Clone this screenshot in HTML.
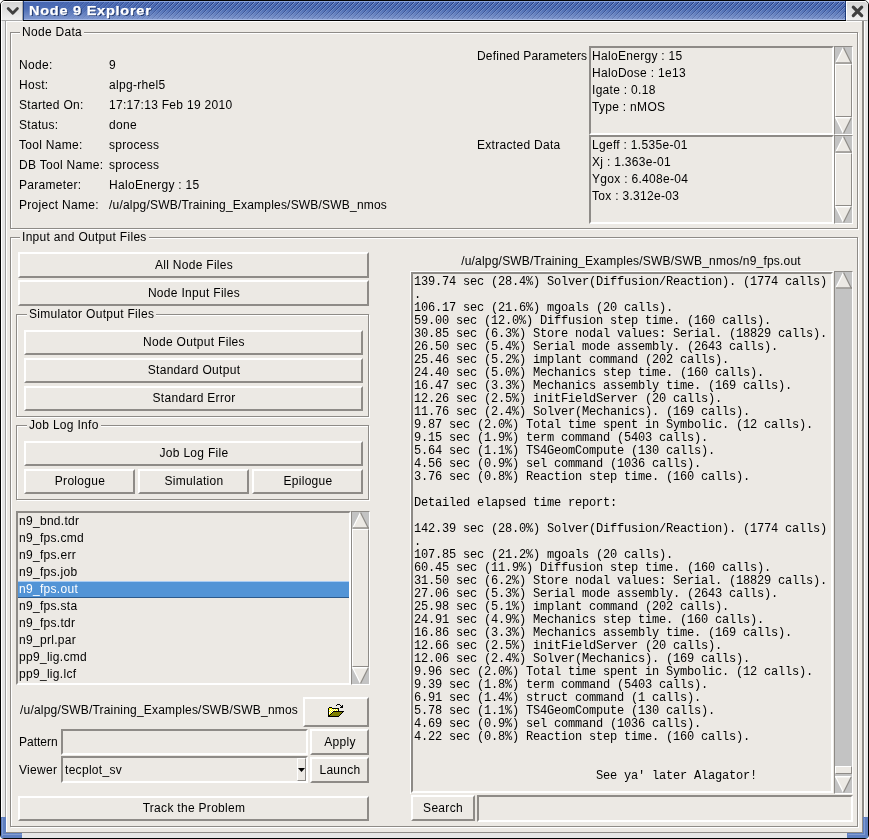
<!DOCTYPE html>
<html><head><meta charset="utf-8"><style>
html,body{margin:0;padding:0;background:#fff;}
body{width:869px;height:839px;position:relative;overflow:hidden;}
.t,.mono{will-change:transform;}
body>div, body>pre{position:absolute;box-sizing:content-box;}
.t{white-space:pre;font-family:"Liberation Sans",sans-serif;font-size:12px;color:#000;line-height:normal;letter-spacing:0.3px;}
.mono{margin:0;font-family:"Liberation Mono",monospace;line-height:13px;color:#000;white-space:pre;}
</style></head><body>
<div style="left:0;top:0;width:867px;height:837px;border:1px solid #000;border-radius:5px 5px 4px 4px;background:#ECE9E4"></div>
<div style="left:1px;top:21px;width:1px;height:817px;background:#FFFFFF;"></div>
<div style="left:2px;top:21px;width:3px;height:817px;background:#E6E6E6;"></div>
<div style="left:5px;top:21px;width:1px;height:812px;background:#A0A0A0;"></div>
<div style="left:6px;top:21px;width:1px;height:811px;background:#FFFFFF;"></div>
<div style="left:862px;top:21px;width:2px;height:812px;background:#8E8B87;"></div>
<div style="left:864px;top:21px;width:1px;height:817px;background:#FFFFFF;"></div>
<div style="left:865px;top:21px;width:3px;height:817px;background:#E6E6E6;"></div>
<div style="left:6px;top:832px;width:858px;height:1px;background:#8E8B87;"></div>
<div style="left:1px;top:833px;width:864px;height:5px;background:#E6E6E6;"></div>
<div style="left:7px;top:21px;width:855px;height:1px;background:#FFFFFF;"></div>
<div style="left:1px;top:817px;width:5px;height:21px;background:#5F7FC0;"></div>
<div style="left:1px;top:833px;width:21px;height:5px;background:#5F7FC0;"></div>
<div style="left:2px;top:818px;width:1px;height:18px;background:#7F9AD0;"></div>
<div style="left:3px;top:834px;width:19px;height:1px;background:#7F9AD0;"></div>
<div style="left:863px;top:817px;width:5px;height:21px;background:#5F7FC0;"></div>
<div style="left:847px;top:833px;width:21px;height:5px;background:#5F7FC0;"></div>
<div style="left:864px;top:818px;width:1px;height:17px;background:#7F9AD0;"></div>
<div style="left:848px;top:834px;width:16px;height:1px;background:#7F9AD0;"></div>
<div style="left:23px;top:1px;width:823px;height:19px;background:linear-gradient(#8CA6DE 0,#8CA6DE 1px,#4666B1 1px,#4E6EB5 8px,#7F97CE 18px,#A2B6E4 18px);border-left:1px solid #1C3A78;border-right:1px solid #1C3A78;box-sizing:border-box"></div>
<svg style="position:absolute;left:24px;top:2px" width="821" height="17" shape-rendering="crispEdges"><defs><pattern id="st" width="5" height="5" patternUnits="userSpaceOnUse"><rect x="4" y="0" width="1" height="1" fill="#18296A" fill-opacity="0.75"/><rect x="3" y="1" width="1" height="1" fill="#18296A" fill-opacity="0.75"/><rect x="2" y="2" width="1" height="1" fill="#18296A" fill-opacity="0.75"/><rect x="1" y="3" width="1" height="1" fill="#18296A" fill-opacity="0.75"/><rect x="0" y="4" width="1" height="1" fill="#18296A" fill-opacity="0.75"/><rect x="0" y="0" width="1" height="1" fill="#FFFFFF" fill-opacity="0.3"/><rect x="4" y="1" width="1" height="1" fill="#FFFFFF" fill-opacity="0.3"/><rect x="3" y="2" width="1" height="1" fill="#FFFFFF" fill-opacity="0.3"/><rect x="2" y="3" width="1" height="1" fill="#FFFFFF" fill-opacity="0.3"/><rect x="1" y="4" width="1" height="1" fill="#FFFFFF" fill-opacity="0.3"/></pattern><linearGradient id="fd" x1="0" y1="0" x2="0" y2="1"><stop offset="0" stop-color="#fff" stop-opacity="1"/><stop offset="1" stop-color="#fff" stop-opacity="0.2"/></linearGradient><mask id="mk"><rect width="821" height="17" fill="url(#fd)"/></mask><linearGradient id="fh" gradientUnits="userSpaceOnUse" x1="20" y1="0" x2="150" y2="0"><stop offset="0" stop-color="#fff" stop-opacity="0"/><stop offset="1" stop-color="#fff" stop-opacity="1"/></linearGradient><mask id="mh"><rect width="821" height="17" fill="url(#fh)"/></mask></defs><g mask="url(#mh)"><rect width="821" height="17" fill="url(#st)" mask="url(#mk)"/></g></svg>
<div style="left:23px;top:20px;width:823px;height:1px;background:#000;"></div>
<div style="left:1px;top:1px;width:22px;height:20px;border-top:1px solid #fff;border-left:1px solid #fff;border-right:1px solid #A8A8A8;border-bottom:1px solid #A8A8A8;box-sizing:border-box;background:linear-gradient(#D4D4D4,#F0F0F0);border-top-left-radius:4px"></div>
<svg style="position:absolute;left:0;top:0" width="24" height="21"><polyline points="8.2,8.5 12.8,13.2 17.4,8.5" fill="none" stroke="#404040" stroke-width="2.8" stroke-linecap="round" stroke-linejoin="round"/></svg>
<div style="left:846px;top:1px;width:22px;height:20px;border-top:1px solid #fff;border-left:1px solid #fff;border-right:1px solid #E0E0E0;border-bottom:1px solid #A8A8A8;box-sizing:border-box;background:linear-gradient(#D4D4D4,#F0F0F0);border-top-right-radius:4px"></div>
<svg style="position:absolute;left:846px;top:0" width="22" height="21"><path d="M7.3,7.2 L15.7,15.6 M15.7,7.2 L7.3,15.6" fill="none" stroke="#404040" stroke-width="3.2" stroke-linecap="round"/></svg>
<div class="t" style="left:29px;top:3px;font-weight:bold;font-size:13px;letter-spacing:0.65px;color:#fff;text-shadow:1px 1px 0 #1E3468;transform:scaleX(1.12);transform-origin:0 0;-webkit-text-stroke:0.25px #fff">Node 9 Explorer</div>
<div style="left:11px;top:33px;width:846px;height:195px;border:1px solid #FFFFFF;"></div>
<div style="left:10px;top:32px;width:846px;height:195px;border:1px solid #8E8B87;"></div>
<div class="t" style="left:20px;top:25px;padding:0 2px;background:#ECE9E4;font-size:12px;">Node Data</div>
<div class="t" style="left:19px;top:58px;font-family:'Liberation Sans',sans-serif;font-size:12px;line-height:normal;color:#000;">Node:</div>
<div class="t" style="left:109px;top:58px;font-family:'Liberation Sans',sans-serif;font-size:12px;line-height:normal;color:#000;">9</div>
<div class="t" style="left:19px;top:78px;font-family:'Liberation Sans',sans-serif;font-size:12px;line-height:normal;color:#000;">Host:</div>
<div class="t" style="left:109px;top:78px;font-family:'Liberation Sans',sans-serif;font-size:12px;line-height:normal;color:#000;">alpg-rhel5</div>
<div class="t" style="left:19px;top:98px;font-family:'Liberation Sans',sans-serif;font-size:12px;line-height:normal;color:#000;">Started On:</div>
<div class="t" style="left:109px;top:98px;font-family:'Liberation Sans',sans-serif;font-size:12px;line-height:normal;color:#000;">17:17:13 Feb 19 2010</div>
<div class="t" style="left:19px;top:118px;font-family:'Liberation Sans',sans-serif;font-size:12px;line-height:normal;color:#000;">Status:</div>
<div class="t" style="left:109px;top:118px;font-family:'Liberation Sans',sans-serif;font-size:12px;line-height:normal;color:#000;">done</div>
<div class="t" style="left:19px;top:138px;font-family:'Liberation Sans',sans-serif;font-size:12px;line-height:normal;color:#000;">Tool Name:</div>
<div class="t" style="left:109px;top:138px;font-family:'Liberation Sans',sans-serif;font-size:12px;line-height:normal;color:#000;">sprocess</div>
<div class="t" style="left:19px;top:158px;font-family:'Liberation Sans',sans-serif;font-size:12px;line-height:normal;color:#000;">DB Tool Name:</div>
<div class="t" style="left:109px;top:158px;font-family:'Liberation Sans',sans-serif;font-size:12px;line-height:normal;color:#000;">sprocess</div>
<div class="t" style="left:19px;top:178px;font-family:'Liberation Sans',sans-serif;font-size:12px;line-height:normal;color:#000;">Parameter:</div>
<div class="t" style="left:109px;top:178px;font-family:'Liberation Sans',sans-serif;font-size:12px;line-height:normal;color:#000;">HaloEnergy : 15</div>
<div class="t" style="left:19px;top:198px;font-family:'Liberation Sans',sans-serif;font-size:12px;line-height:normal;color:#000;">Project Name:</div>
<div class="t" style="left:109px;top:198px;font-family:'Liberation Sans',sans-serif;font-size:12px;line-height:normal;color:#000;letter-spacing:0.2px">/u/alpg/SWB/Training_Examples/SWB/SWB_nmos</div>
<div class="t" style="left:477px;top:49px;font-family:'Liberation Sans',sans-serif;font-size:12px;line-height:normal;color:#000;letter-spacing:0.2px">Defined Parameters</div>
<div class="t" style="left:477px;top:138px;font-family:'Liberation Sans',sans-serif;font-size:12px;line-height:normal;color:#000;">Extracted Data</div>
<div style="left:589px;top:46px;width:241px;height:85px;border:2px solid;border-color:#8E8B87 #FFFFFF #FFFFFF #8E8B87;background:#ECE9E4;"></div>
<div class="t" style="left:592px;top:49px;font-family:'Liberation Sans',sans-serif;font-size:12px;line-height:normal;color:#000;">HaloEnergy : 15</div>
<div class="t" style="left:592px;top:66px;font-family:'Liberation Sans',sans-serif;font-size:12px;line-height:normal;color:#000;">HaloDose : 1e13</div>
<div class="t" style="left:592px;top:83px;font-family:'Liberation Sans',sans-serif;font-size:12px;line-height:normal;color:#000;">Igate : 0.18</div>
<div class="t" style="left:592px;top:100px;font-family:'Liberation Sans',sans-serif;font-size:12px;line-height:normal;color:#000;">Type : nMOS</div>
<div style="left:834px;top:46px;width:17px;height:87px;border:1px solid;border-color:#8E8B87 #FFFFFF #FFFFFF #8E8B87;background:#ECE9E4;"></div>
<svg style="position:absolute;left:835px;top:47px" width="17" height="17" viewBox="0 0 17 17">
<rect x="0" y="0" width="17" height="17" fill="#C3C3C3"/>
<polygon points="8.5,0.5 16.5,16.5 0.5,16.5" fill="#ECE9E4"/>
<line x1="8.5" y1="0.5" x2="0.5" y2="16.5" stroke="#FFFFFF" stroke-width="1.2"/>
<line x1="8.5" y1="0.5" x2="16.5" y2="16.5" stroke="#8E8B87" stroke-width="1.2"/>
<line x1="0.5" y1="16" x2="17" y2="16" stroke="#8E8B87" stroke-width="1.4"/>
</svg>
<svg style="position:absolute;left:835px;top:117px" width="17" height="17" viewBox="0 0 17 17">
<rect x="0" y="0" width="17" height="17" fill="#C3C3C3"/>
<polygon points="0.5,0.5 16.5,0.5 8.5,16.5" fill="#ECE9E4"/>
<line x1="0" y1="0.7" x2="17" y2="0.7" stroke="#FFFFFF" stroke-width="1.4"/>
<line x1="0.5" y1="0.5" x2="8.5" y2="16.5" stroke="#FFFFFF" stroke-width="1.2"/>
<line x1="16.5" y1="0.5" x2="8.5" y2="16.5" stroke="#8E8B87" stroke-width="1.2"/>
</svg>
<div style="left:835px;top:64px;width:15px;height:51px;border:1px solid;border-color:#FFFFFF #8E8B87 #8E8B87 #FFFFFF;background:#ECE9E4;"></div>
<div style="left:589px;top:135px;width:241px;height:85px;border:2px solid;border-color:#8E8B87 #FFFFFF #FFFFFF #8E8B87;background:#ECE9E4;"></div>
<div class="t" style="left:592px;top:138px;font-family:'Liberation Sans',sans-serif;font-size:12px;line-height:normal;color:#000;">Lgeff : 1.535e-01</div>
<div class="t" style="left:592px;top:155px;font-family:'Liberation Sans',sans-serif;font-size:12px;line-height:normal;color:#000;">Xj : 1.363e-01</div>
<div class="t" style="left:592px;top:172px;font-family:'Liberation Sans',sans-serif;font-size:12px;line-height:normal;color:#000;">Ygox : 6.408e-04</div>
<div class="t" style="left:592px;top:189px;font-family:'Liberation Sans',sans-serif;font-size:12px;line-height:normal;color:#000;">Tox : 3.312e-03</div>
<div style="left:834px;top:135px;width:17px;height:87px;border:1px solid;border-color:#8E8B87 #FFFFFF #FFFFFF #8E8B87;background:#ECE9E4;"></div>
<svg style="position:absolute;left:835px;top:136px" width="17" height="17" viewBox="0 0 17 17">
<rect x="0" y="0" width="17" height="17" fill="#C3C3C3"/>
<polygon points="8.5,0.5 16.5,16.5 0.5,16.5" fill="#ECE9E4"/>
<line x1="8.5" y1="0.5" x2="0.5" y2="16.5" stroke="#FFFFFF" stroke-width="1.2"/>
<line x1="8.5" y1="0.5" x2="16.5" y2="16.5" stroke="#8E8B87" stroke-width="1.2"/>
<line x1="0.5" y1="16" x2="17" y2="16" stroke="#8E8B87" stroke-width="1.4"/>
</svg>
<svg style="position:absolute;left:835px;top:206px" width="17" height="17" viewBox="0 0 17 17">
<rect x="0" y="0" width="17" height="17" fill="#C3C3C3"/>
<polygon points="0.5,0.5 16.5,0.5 8.5,16.5" fill="#ECE9E4"/>
<line x1="0" y1="0.7" x2="17" y2="0.7" stroke="#FFFFFF" stroke-width="1.4"/>
<line x1="0.5" y1="0.5" x2="8.5" y2="16.5" stroke="#FFFFFF" stroke-width="1.2"/>
<line x1="16.5" y1="0.5" x2="8.5" y2="16.5" stroke="#8E8B87" stroke-width="1.2"/>
</svg>
<div style="left:835px;top:153px;width:15px;height:51px;border:1px solid;border-color:#FFFFFF #8E8B87 #8E8B87 #FFFFFF;background:#ECE9E4;"></div>
<div style="left:11px;top:238px;width:846px;height:588px;border:1px solid #FFFFFF;"></div>
<div style="left:10px;top:237px;width:846px;height:588px;border:1px solid #8E8B87;"></div>
<div class="t" style="left:20px;top:230px;padding:0 2px;background:#ECE9E4;font-size:12px;">Input and Output Files</div>
<div style="left:18px;top:252px;width:347px;height:22px;border:2px solid;border-color:#FFFFFF #8E8B87 #8E8B87 #FFFFFF;background:#ECE9E4;"></div>
<div class="t" style="left:-6.5px;width:400px;text-align:center;top:258px;font-family:'Liberation Sans',sans-serif;font-size:12px;">All Node Files</div>
<div style="left:18px;top:280px;width:347px;height:22px;border:2px solid;border-color:#FFFFFF #8E8B87 #8E8B87 #FFFFFF;background:#ECE9E4;"></div>
<div class="t" style="left:-6.5px;width:400px;text-align:center;top:286px;font-family:'Liberation Sans',sans-serif;font-size:12px;">Node Input Files</div>
<div style="left:17px;top:315px;width:351px;height:101px;border:1px solid #FFFFFF;"></div>
<div style="left:16px;top:314px;width:351px;height:101px;border:1px solid #8E8B87;"></div>
<div class="t" style="left:27px;top:307px;padding:0 2px;background:#ECE9E4;font-size:12px;">Simulator Output Files</div>
<div style="left:24px;top:330px;width:335px;height:21px;border:2px solid;border-color:#FFFFFF #8E8B87 #8E8B87 #FFFFFF;background:#ECE9E4;"></div>
<div class="t" style="left:-6.5px;width:400px;text-align:center;top:335px;font-family:'Liberation Sans',sans-serif;font-size:12px;">Node Output Files</div>
<div style="left:24px;top:358px;width:335px;height:21px;border:2px solid;border-color:#FFFFFF #8E8B87 #8E8B87 #FFFFFF;background:#ECE9E4;"></div>
<div class="t" style="left:-6.5px;width:400px;text-align:center;top:363px;font-family:'Liberation Sans',sans-serif;font-size:12px;">Standard Output</div>
<div style="left:24px;top:386px;width:335px;height:21px;border:2px solid;border-color:#FFFFFF #8E8B87 #8E8B87 #FFFFFF;background:#ECE9E4;"></div>
<div class="t" style="left:-6.5px;width:400px;text-align:center;top:391px;font-family:'Liberation Sans',sans-serif;font-size:12px;">Standard Error</div>
<div style="left:17px;top:426px;width:351px;height:73px;border:1px solid #FFFFFF;"></div>
<div style="left:16px;top:425px;width:351px;height:73px;border:1px solid #8E8B87;"></div>
<div class="t" style="left:27px;top:418px;padding:0 2px;background:#ECE9E4;font-size:12px;">Job Log Info</div>
<div style="left:24px;top:441px;width:335px;height:21px;border:2px solid;border-color:#FFFFFF #8E8B87 #8E8B87 #FFFFFF;background:#ECE9E4;"></div>
<div class="t" style="left:-6.5px;width:400px;text-align:center;top:446px;font-family:'Liberation Sans',sans-serif;font-size:12px;">Job Log File</div>
<div style="left:24px;top:469px;width:107px;height:21px;border:2px solid;border-color:#FFFFFF #8E8B87 #8E8B87 #FFFFFF;background:#ECE9E4;"></div>
<div class="t" style="left:-120.5px;width:400px;text-align:center;top:474px;font-family:'Liberation Sans',sans-serif;font-size:12px;">Prologue</div>
<div style="left:138px;top:469px;width:107px;height:21px;border:2px solid;border-color:#FFFFFF #8E8B87 #8E8B87 #FFFFFF;background:#ECE9E4;"></div>
<div class="t" style="left:-6.5px;width:400px;text-align:center;top:474px;font-family:'Liberation Sans',sans-serif;font-size:12px;">Simulation</div>
<div style="left:252px;top:469px;width:107px;height:21px;border:2px solid;border-color:#FFFFFF #8E8B87 #8E8B87 #FFFFFF;background:#ECE9E4;"></div>
<div class="t" style="left:107.5px;width:400px;text-align:center;top:474px;font-family:'Liberation Sans',sans-serif;font-size:12px;">Epilogue</div>
<div style="left:16px;top:511px;width:331px;height:170px;border:2px solid;border-color:#8E8B87 #FFFFFF #FFFFFF #8E8B87;background:#ECE9E4;"></div>
<div style="left:18px;top:581px;width:331px;height:17px;background:#5294D6;"></div>
<div style="left:18px;top:581px;width:331px;height:1px;background:#A8CCF4;"></div>
<div style="left:18px;top:597px;width:331px;height:1px;background:#2C5A8C;"></div>
<div class="t" style="left:19px;top:514px;font-family:'Liberation Sans',sans-serif;font-size:12px;line-height:normal;color:#000;">n9_bnd.tdr</div>
<div class="t" style="left:19px;top:531px;font-family:'Liberation Sans',sans-serif;font-size:12px;line-height:normal;color:#000;">n9_fps.cmd</div>
<div class="t" style="left:19px;top:548px;font-family:'Liberation Sans',sans-serif;font-size:12px;line-height:normal;color:#000;">n9_fps.err</div>
<div class="t" style="left:19px;top:565px;font-family:'Liberation Sans',sans-serif;font-size:12px;line-height:normal;color:#000;">n9_fps.job</div>
<div class="t" style="left:19px;top:582px;font-family:'Liberation Sans',sans-serif;font-size:12px;line-height:normal;color:#fff;">n9_fps.out</div>
<div class="t" style="left:19px;top:599px;font-family:'Liberation Sans',sans-serif;font-size:12px;line-height:normal;color:#000;">n9_fps.sta</div>
<div class="t" style="left:19px;top:616px;font-family:'Liberation Sans',sans-serif;font-size:12px;line-height:normal;color:#000;">n9_fps.tdr</div>
<div class="t" style="left:19px;top:633px;font-family:'Liberation Sans',sans-serif;font-size:12px;line-height:normal;color:#000;">n9_prl.par</div>
<div class="t" style="left:19px;top:650px;font-family:'Liberation Sans',sans-serif;font-size:12px;line-height:normal;color:#000;">pp9_lig.cmd</div>
<div class="t" style="left:19px;top:667px;font-family:'Liberation Sans',sans-serif;font-size:12px;line-height:normal;color:#000;">pp9_lig.lcf</div>
<div style="left:351px;top:511px;width:17px;height:172px;border:1px solid;border-color:#8E8B87 #FFFFFF #FFFFFF #8E8B87;background:#ECE9E4;"></div>
<svg style="position:absolute;left:352px;top:512px" width="17" height="17" viewBox="0 0 17 17">
<rect x="0" y="0" width="17" height="17" fill="#C3C3C3"/>
<polygon points="8.5,0.5 16.5,16.5 0.5,16.5" fill="#ECE9E4"/>
<line x1="8.5" y1="0.5" x2="0.5" y2="16.5" stroke="#FFFFFF" stroke-width="1.2"/>
<line x1="8.5" y1="0.5" x2="16.5" y2="16.5" stroke="#8E8B87" stroke-width="1.2"/>
<line x1="0.5" y1="16" x2="17" y2="16" stroke="#8E8B87" stroke-width="1.4"/>
</svg>
<svg style="position:absolute;left:352px;top:667px" width="17" height="17" viewBox="0 0 17 17">
<rect x="0" y="0" width="17" height="17" fill="#C3C3C3"/>
<polygon points="0.5,0.5 16.5,0.5 8.5,16.5" fill="#ECE9E4"/>
<line x1="0" y1="0.7" x2="17" y2="0.7" stroke="#FFFFFF" stroke-width="1.4"/>
<line x1="0.5" y1="0.5" x2="8.5" y2="16.5" stroke="#FFFFFF" stroke-width="1.2"/>
<line x1="16.5" y1="0.5" x2="8.5" y2="16.5" stroke="#8E8B87" stroke-width="1.2"/>
</svg>
<div style="left:352px;top:529px;width:15px;height:136px;border:1px solid;border-color:#FFFFFF #8E8B87 #8E8B87 #FFFFFF;background:#ECE9E4;"></div>
<div class="t" style="left:20px;top:703px;font-family:'Liberation Sans',sans-serif;font-size:12px;line-height:normal;color:#000;letter-spacing:0.2px">/u/alpg/SWB/Training_Examples/SWB/SWB_nmos</div>
<div style="left:303px;top:697px;width:62px;height:26px;border:2px solid;border-color:#FFFFFF #8E8B87 #8E8B87 #FFFFFF;background:#ECE9E4;"></div>
<svg style="position:absolute;left:324px;top:700px" width="24" height="20" shape-rendering="crispEdges"><rect x="13" y="4" width="1" height="1" fill="#000000"/><rect x="14" y="4" width="1" height="1" fill="#000000"/><rect x="15" y="4" width="1" height="1" fill="#000000"/><rect x="12" y="5" width="1" height="1" fill="#000000"/><rect x="16" y="5" width="1" height="1" fill="#000000"/><rect x="18" y="5" width="1" height="1" fill="#000000"/><rect x="17" y="6" width="1" height="1" fill="#000000"/><rect x="18" y="6" width="1" height="1" fill="#000000"/><rect x="16" y="7" width="1" height="1" fill="#000000"/><rect x="17" y="7" width="1" height="1" fill="#000000"/><rect x="18" y="7" width="1" height="1" fill="#000000"/><rect x="5" y="7" width="1" height="1" fill="#000000"/><rect x="6" y="7" width="1" height="1" fill="#000000"/><rect x="7" y="7" width="1" height="1" fill="#000000"/><rect x="4" y="8" width="1" height="1" fill="#000000"/><rect x="5" y="8" width="1" height="1" fill="#FFFF00"/><rect x="6" y="8" width="1" height="1" fill="#FFFF00"/><rect x="7" y="8" width="1" height="1" fill="#FFFF00"/><rect x="8" y="8" width="1" height="1" fill="#000000"/><rect x="9" y="8" width="1" height="1" fill="#000000"/><rect x="10" y="8" width="1" height="1" fill="#000000"/><rect x="11" y="8" width="1" height="1" fill="#000000"/><rect x="12" y="8" width="1" height="1" fill="#000000"/><rect x="13" y="8" width="1" height="1" fill="#000000"/><rect x="14" y="8" width="1" height="1" fill="#000000"/><rect x="4" y="9" width="1" height="1" fill="#000000"/><rect x="14" y="9" width="1" height="1" fill="#000000"/><rect x="5" y="9" width="1" height="1" fill="#FFFF00"/><rect x="6" y="9" width="1" height="1" fill="#FFFFFF"/><rect x="7" y="9" width="1" height="1" fill="#FFFF00"/><rect x="8" y="9" width="1" height="1" fill="#FFFFFF"/><rect x="9" y="9" width="1" height="1" fill="#FFFF00"/><rect x="10" y="9" width="1" height="1" fill="#FFFFFF"/><rect x="11" y="9" width="1" height="1" fill="#FFFF00"/><rect x="12" y="9" width="1" height="1" fill="#FFFFFF"/><rect x="13" y="9" width="1" height="1" fill="#FFFF00"/><rect x="4" y="10" width="1" height="1" fill="#000000"/><rect x="14" y="10" width="1" height="1" fill="#000000"/><rect x="5" y="10" width="1" height="1" fill="#FFFFFF"/><rect x="6" y="10" width="1" height="1" fill="#FFFF00"/><rect x="7" y="10" width="1" height="1" fill="#FFFFFF"/><rect x="8" y="10" width="1" height="1" fill="#FFFF00"/><rect x="9" y="10" width="1" height="1" fill="#FFFFFF"/><rect x="10" y="10" width="1" height="1" fill="#FFFF00"/><rect x="11" y="10" width="1" height="1" fill="#FFFFFF"/><rect x="12" y="10" width="1" height="1" fill="#FFFF00"/><rect x="13" y="10" width="1" height="1" fill="#FFFFFF"/><rect x="4" y="11" width="1" height="1" fill="#000000"/><rect x="5" y="11" width="1" height="1" fill="#FFFF00"/><rect x="6" y="11" width="1" height="1" fill="#FFFFFF"/><rect x="7" y="11" width="1" height="1" fill="#FFFF00"/><rect x="8" y="11" width="1" height="1" fill="#FFFFFF"/><rect x="9" y="11" width="1" height="1" fill="#000000"/><rect x="10" y="11" width="1" height="1" fill="#000000"/><rect x="11" y="11" width="1" height="1" fill="#000000"/><rect x="12" y="11" width="1" height="1" fill="#000000"/><rect x="13" y="11" width="1" height="1" fill="#000000"/><rect x="14" y="11" width="1" height="1" fill="#000000"/><rect x="15" y="11" width="1" height="1" fill="#000000"/><rect x="16" y="11" width="1" height="1" fill="#000000"/><rect x="17" y="11" width="1" height="1" fill="#000000"/><rect x="18" y="11" width="1" height="1" fill="#000000"/><rect x="19" y="11" width="1" height="1" fill="#000000"/><rect x="4" y="12" width="1" height="1" fill="#000000"/><rect x="5" y="12" width="1" height="1" fill="#FFFFFF"/><rect x="6" y="12" width="1" height="1" fill="#FFFF00"/><rect x="7" y="12" width="1" height="1" fill="#FFFFFF"/><rect x="8" y="12" width="1" height="1" fill="#000000"/><rect x="9" y="12" width="1" height="1" fill="#808000"/><rect x="10" y="12" width="1" height="1" fill="#808000"/><rect x="11" y="12" width="1" height="1" fill="#808000"/><rect x="12" y="12" width="1" height="1" fill="#808000"/><rect x="13" y="12" width="1" height="1" fill="#808000"/><rect x="14" y="12" width="1" height="1" fill="#808000"/><rect x="15" y="12" width="1" height="1" fill="#808000"/><rect x="16" y="12" width="1" height="1" fill="#808000"/><rect x="17" y="12" width="1" height="1" fill="#808000"/><rect x="18" y="12" width="1" height="1" fill="#000000"/><rect x="4" y="13" width="1" height="1" fill="#000000"/><rect x="5" y="13" width="1" height="1" fill="#FFFFFF"/><rect x="6" y="13" width="1" height="1" fill="#FFFF00"/><rect x="7" y="13" width="1" height="1" fill="#000000"/><rect x="8" y="13" width="1" height="1" fill="#808000"/><rect x="9" y="13" width="1" height="1" fill="#808000"/><rect x="10" y="13" width="1" height="1" fill="#808000"/><rect x="11" y="13" width="1" height="1" fill="#808000"/><rect x="12" y="13" width="1" height="1" fill="#808000"/><rect x="13" y="13" width="1" height="1" fill="#808000"/><rect x="14" y="13" width="1" height="1" fill="#808000"/><rect x="15" y="13" width="1" height="1" fill="#808000"/><rect x="16" y="13" width="1" height="1" fill="#808000"/><rect x="17" y="13" width="1" height="1" fill="#000000"/><rect x="4" y="14" width="1" height="1" fill="#000000"/><rect x="5" y="14" width="1" height="1" fill="#FFFF00"/><rect x="6" y="14" width="1" height="1" fill="#000000"/><rect x="7" y="14" width="1" height="1" fill="#808000"/><rect x="8" y="14" width="1" height="1" fill="#808000"/><rect x="9" y="14" width="1" height="1" fill="#808000"/><rect x="10" y="14" width="1" height="1" fill="#808000"/><rect x="11" y="14" width="1" height="1" fill="#808000"/><rect x="12" y="14" width="1" height="1" fill="#808000"/><rect x="13" y="14" width="1" height="1" fill="#808000"/><rect x="14" y="14" width="1" height="1" fill="#808000"/><rect x="15" y="14" width="1" height="1" fill="#808000"/><rect x="16" y="14" width="1" height="1" fill="#000000"/><rect x="4" y="15" width="1" height="1" fill="#000000"/><rect x="5" y="15" width="1" height="1" fill="#000000"/><rect x="6" y="15" width="1" height="1" fill="#808000"/><rect x="7" y="15" width="1" height="1" fill="#808000"/><rect x="8" y="15" width="1" height="1" fill="#808000"/><rect x="9" y="15" width="1" height="1" fill="#808000"/><rect x="10" y="15" width="1" height="1" fill="#808000"/><rect x="11" y="15" width="1" height="1" fill="#808000"/><rect x="12" y="15" width="1" height="1" fill="#808000"/><rect x="13" y="15" width="1" height="1" fill="#808000"/><rect x="14" y="15" width="1" height="1" fill="#808000"/><rect x="15" y="15" width="1" height="1" fill="#000000"/><rect x="4" y="16" width="1" height="1" fill="#000000"/><rect x="5" y="16" width="1" height="1" fill="#000000"/><rect x="6" y="16" width="1" height="1" fill="#000000"/><rect x="7" y="16" width="1" height="1" fill="#000000"/><rect x="8" y="16" width="1" height="1" fill="#000000"/><rect x="9" y="16" width="1" height="1" fill="#000000"/><rect x="10" y="16" width="1" height="1" fill="#000000"/><rect x="11" y="16" width="1" height="1" fill="#000000"/><rect x="12" y="16" width="1" height="1" fill="#000000"/><rect x="13" y="16" width="1" height="1" fill="#000000"/><rect x="14" y="16" width="1" height="1" fill="#000000"/></svg>
<div class="t" style="left:19px;top:735px;font-family:'Liberation Sans',sans-serif;font-size:12px;line-height:normal;color:#000;letter-spacing:0">Pattern</div>
<div style="left:61px;top:729px;width:243px;height:22px;border:2px solid;border-color:#8E8B87 #FFFFFF #FFFFFF #8E8B87;background:#ECE9E4;"></div>
<div style="left:310px;top:729px;width:55px;height:22px;border:2px solid;border-color:#FFFFFF #8E8B87 #8E8B87 #FFFFFF;background:#ECE9E4;"></div>
<div class="t" style="left:139.5px;width:400px;text-align:center;top:735px;font-family:'Liberation Sans',sans-serif;font-size:12px;">Apply</div>
<div class="t" style="left:19px;top:763px;font-family:'Liberation Sans',sans-serif;font-size:12px;line-height:normal;color:#000;">Viewer</div>
<div style="left:61px;top:756px;width:243px;height:23px;border:2px solid;border-color:#8E8B87 #FFFFFF #FFFFFF #8E8B87;background:#ECE9E4;"></div>
<div class="t" style="left:65px;top:763px;font-family:'Liberation Sans',sans-serif;font-size:12px;line-height:normal;color:#000;">tecplot_sv</div>
<div style="left:297px;top:758px;width:7px;height:21px;border:1px solid;border-color:#FFFFFF #8E8B87 #8E8B87 #FFFFFF;background:#ECE9E4;"></div>
<svg style="position:absolute;left:297px;top:767px" width="9" height="6"><polygon points="1,1 8,1 4.5,5" fill="#000"/></svg>
<div style="left:310px;top:757px;width:55px;height:22px;border:2px solid;border-color:#FFFFFF #8E8B87 #8E8B87 #FFFFFF;background:#ECE9E4;"></div>
<div class="t" style="left:139.5px;width:400px;text-align:center;top:763px;font-family:'Liberation Sans',sans-serif;font-size:12px;">Launch</div>
<div style="left:18px;top:796px;width:347px;height:21px;border:2px solid;border-color:#FFFFFF #8E8B87 #8E8B87 #FFFFFF;background:#ECE9E4;"></div>
<div class="t" style="left:-6.5px;width:400px;text-align:center;top:801px;font-family:'Liberation Sans',sans-serif;font-size:12px;">Track the Problem</div>
<div class="t" style="left:431px;width:400px;text-align:center;top:254px;font-family:'Liberation Sans',sans-serif;font-size:12px;letter-spacing:0.2px">/u/alpg/SWB/Training_Examples/SWB/SWB_nmos/n9_fps.out</div>
<div style="left:410px;top:271px;width:424px;height:1px;background:#FFFFFF;"></div>
<div style="left:410px;top:271px;width:1px;height:523px;background:#FFFFFF;"></div>
<div style="left:411px;top:272px;width:418px;height:517px;border:2px solid;border-color:#8E8B87 #FFFFFF #FFFFFF #8E8B87;background:#ECE9E4;"></div>
<pre class="mono" style="left:414px;top:276px;font-size:12px;letter-spacing:-0.2px;">139.74 sec (28.4%) Solver(Diffusion/Reaction). (1774 calls)
.
106.17 sec (21.6%) mgoals (20 calls).
59.00 sec (12.0%) Diffusion step time. (160 calls).
30.85 sec (6.3%) Store nodal values: Serial. (18829 calls).
26.50 sec (5.4%) Serial mode assembly. (2643 calls).
25.46 sec (5.2%) implant command (202 calls).
24.40 sec (5.0%) Mechanics step time. (160 calls).
16.47 sec (3.3%) Mechanics assembly time. (169 calls).
12.26 sec (2.5%) initFieldServer (20 calls).
11.76 sec (2.4%) Solver(Mechanics). (169 calls).
9.87 sec (2.0%) Total time spent in Symbolic. (12 calls).
9.15 sec (1.9%) term command (5403 calls).
5.64 sec (1.1%) TS4GeomCompute (130 calls).
4.56 sec (0.9%) sel command (1036 calls).
3.76 sec (0.8%) Reaction step time. (160 calls).

Detailed elapsed time report:

142.39 sec (28.0%) Solver(Diffusion/Reaction). (1774 calls)
.
107.85 sec (21.2%) mgoals (20 calls).
60.45 sec (11.9%) Diffusion step time. (160 calls).
31.50 sec (6.2%) Store nodal values: Serial. (18829 calls).
27.06 sec (5.3%) Serial mode assembly. (2643 calls).
25.98 sec (5.1%) implant command (202 calls).
24.91 sec (4.9%) Mechanics step time. (160 calls).
16.86 sec (3.3%) Mechanics assembly time. (169 calls).
12.66 sec (2.5%) initFieldServer (20 calls).
12.06 sec (2.4%) Solver(Mechanics). (169 calls).
9.96 sec (2.0%) Total time spent in Symbolic. (12 calls).
9.39 sec (1.8%) term command (5403 calls).
6.91 sec (1.4%) struct command (1 calls).
5.78 sec (1.1%) TS4GeomCompute (130 calls).
4.69 sec (0.9%) sel command (1036 calls).
4.22 sec (0.8%) Reaction step time. (160 calls).


                          See ya' later Alagator!</pre>
<div style="left:834px;top:271px;width:17px;height:521px;border:1px solid;border-color:#8E8B87 #FFFFFF #FFFFFF #8E8B87;background:#C3C3C3;"></div>
<svg style="position:absolute;left:835px;top:272px" width="17" height="17" viewBox="0 0 17 17">
<rect x="0" y="0" width="17" height="17" fill="#C3C3C3"/>
<polygon points="8.5,0.5 16.5,16.5 0.5,16.5" fill="#ECE9E4"/>
<line x1="8.5" y1="0.5" x2="0.5" y2="16.5" stroke="#FFFFFF" stroke-width="1.2"/>
<line x1="8.5" y1="0.5" x2="16.5" y2="16.5" stroke="#8E8B87" stroke-width="1.2"/>
<line x1="0.5" y1="16" x2="17" y2="16" stroke="#8E8B87" stroke-width="1.4"/>
</svg>
<svg style="position:absolute;left:835px;top:776px" width="17" height="17" viewBox="0 0 17 17">
<rect x="0" y="0" width="17" height="17" fill="#C3C3C3"/>
<polygon points="0.5,0.5 16.5,0.5 8.5,16.5" fill="#ECE9E4"/>
<line x1="0" y1="0.7" x2="17" y2="0.7" stroke="#FFFFFF" stroke-width="1.4"/>
<line x1="0.5" y1="0.5" x2="8.5" y2="16.5" stroke="#FFFFFF" stroke-width="1.2"/>
<line x1="16.5" y1="0.5" x2="8.5" y2="16.5" stroke="#8E8B87" stroke-width="1.2"/>
</svg>
<div style="left:835px;top:766px;width:15px;height:6px;border:1px solid;border-color:#FFFFFF #8E8B87 #8E8B87 #FFFFFF;background:#ECE9E4;"></div>
<div style="left:411px;top:795px;width:60px;height:22px;border:2px solid;border-color:#FFFFFF #8E8B87 #8E8B87 #FFFFFF;background:#ECE9E4;"></div>
<div class="t" style="left:243.0px;width:400px;text-align:center;top:801px;font-family:'Liberation Sans',sans-serif;font-size:12px;">Search</div>
<div style="left:477px;top:795px;width:372px;height:23px;border:2px solid;border-color:#8E8B87 #FFFFFF #FFFFFF #8E8B87;background:#ECE9E4;"></div>
</body></html>
